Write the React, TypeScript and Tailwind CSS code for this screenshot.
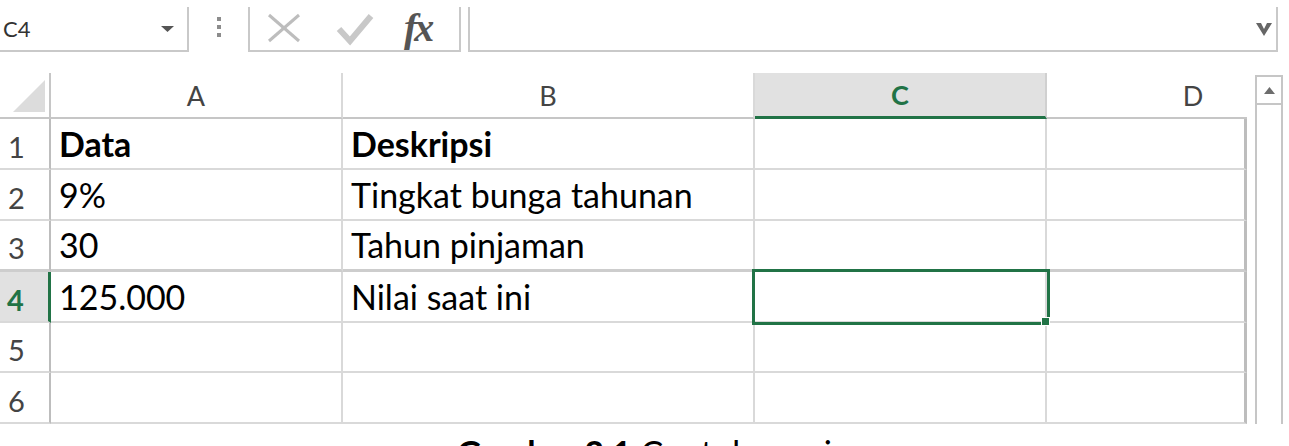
const rows = [
  { n: "1", a: "Data", b: "Deskripsi", bold: true, h: "h-[51px]" },
  { n: "2", a: "9%", b: "Tingkat bunga tahunan", h: "h-[51px]" },
  { n: "3", a: "30", b: "Tahun pinjaman", h: "h-[51px]", dark: true },
  { n: "4", a: "125.000", b: "Nilai saat ini", h: "h-[51px]", selected: true },
  { n: "5", a: "", b: "", h: "h-[50px]" },
  { n: "6", a: "", b: "", h: "h-[51px]" },
];

function FormulaBar() {
  return (
    <div className="flex pt-[7px] h-[52px]">
      <div className="w-[189px] h-[45px] border-r-2 border-b-2 border-[#c9c9c9] flex items-center justify-between pl-[3px] pr-[13px]">
        <span className="text-[22px] leading-none text-[#333]">C4</span>
        <svg width="13" height="6" viewBox="0 0 13 6">
          <polygon points="0,0 13,0 6.5,6" fill="#555" />
        </svg>
      </div>
      <div className="w-[59px] flex flex-col items-center justify-center gap-[4px] pb-[6px]">
        <span className="w-[4px] h-[4px] bg-[#8c8c8c]" />
        <span className="w-[4px] h-[4px] bg-[#8c8c8c]" />
        <span className="w-[4px] h-[4px] bg-[#8c8c8c]" />
      </div>
      <div className="w-[213px] h-[45px] border-x-2 border-b-2 border-[#c9c9c9] flex items-center pl-[17px]">
        <svg width="34" height="30" viewBox="0 0 34 30" className="mt-[-1px]">
          <line x1="2" y1="2" x2="32" y2="28" stroke="#bdbdbd" strokeWidth="3" />
          <line x1="32" y1="2" x2="2" y2="28" stroke="#bdbdbd" strokeWidth="3" />
        </svg>
        <svg width="38" height="34" viewBox="0 0 38 34" className="ml-[35px]">
          <polyline points="3,17 14,29 35,4" fill="none" stroke="#c8c8c8" strokeWidth="6" />
        </svg>
        <span className="ml-[30px] mt-[-2px] font-['Liberation_Serif',serif] italic font-bold text-[40px] leading-none text-[#555] tracking-[-3px]">
          fx
        </span>
      </div>
      <div className="ml-[7px] w-[810px] h-[45px] border-x-2 border-b-2 border-[#c9c9c9] flex items-center justify-end pr-[4px]">
        <svg width="16" height="16" viewBox="0 0 16 16">
          <polygon points="0,2 5,2 8,8 11,2 16,2 8,15" fill="#666" />
        </svg>
      </div>
    </div>
  );
}

function HeaderRow() {
  return (
    <div className="flex h-[46px]">
      <div className="w-[51px] border-r-2 border-r-[#c6c6c6] border-b-2 border-b-[#c6c6c6] relative">
        <svg width="32" height="32" viewBox="0 0 32 32" className="absolute left-[13px] top-[7px]">
          <polygon points="32,0 32,32 0,32" fill="#dcdcdc" />
        </svg>
      </div>
      <div className="w-[292px] border-r-2 border-r-[#d9d9d9] border-b-2 border-b-[#c6c6c6] flex items-center justify-center text-[27px] leading-none text-[#444]">
        A
      </div>
      <div className="w-[412px] border-r-2 border-r-[#d9d9d9] border-b-2 border-b-[#c6c6c6] flex items-center justify-center text-[27px] leading-none text-[#444]">
        B
      </div>
      <div className="w-[292px] bg-[#e1e1e1] border-r-2 border-r-[#d0d0d0] border-b-[3px] border-b-[#217346] flex items-center justify-center text-[27px] leading-none font-bold text-[#217346]">
        C
      </div>
      <div className="w-[200px] border-b-2 border-b-[#c6c6c6] overflow-hidden flex items-center">
        <div className="w-[292px] shrink-0 text-center text-[27px] leading-none text-[#444]">D</div>
      </div>
    </div>
  );
}

function Row({ r }: { r: (typeof rows)[number] }) {
  const bottom = r.dark ? "border-b-[3px] border-b-[#cdcdcd]" : "border-b-2 border-b-[#d9d9d9]";
  const cell = `border-r-2 border-r-[#d9d9d9] ${bottom} flex items-center pl-[8px] text-[34px] leading-none text-black`;
  return (
    <div className={`flex ${r.h}`}>
      {r.selected ? (
        <div className={`w-[51px] bg-[#e1e1e1] border-r-[3px] border-r-[#217346] ${bottom} flex items-center pl-[7px] pt-[5px] text-[29px] leading-none font-bold text-[#217346]`}>
          {r.n}
        </div>
      ) : (
        <div className={`w-[51px] border-r-2 border-r-[#bdbdbd] ${bottom} flex items-center pl-[8px] pt-[5px] text-[29px] leading-none text-[#444]`}>
          {r.n}
        </div>
      )}
      <div className={`w-[292px] ${cell} ${r.bold ? "font-bold" : ""}`}>{r.a}</div>
      <div className={`w-[412px] ${cell} ${r.bold ? "font-bold" : ""}`}>{r.b}</div>
      <div className={`w-[292px] ${cell} relative`}>
        {r.selected && (
          <div className="absolute -left-[3px] -top-[3px] w-[298px] h-[56px] border-[3px] border-[#217346] z-10">
            <span className="absolute left-[286px] top-[45px] w-[9px] h-[9px] bg-[#217346] border border-white" />
          </div>
        )}
      </div>
      <div className={`w-[200px] border-r-[3px] border-r-[#bdbdbd] ${bottom}`} />
    </div>
  );
}

function Scrollbar() {
  return (
    <div className="ml-[8px] w-[28px] mt-[2px] h-[349px] border-x-2 border-t-2 border-[#c6c6c6]">
      <div className="h-[28px] border-b-2 border-[#c6c6c6] flex items-center justify-center">
        <svg width="11" height="7" viewBox="0 0 11 7">
          <polygon points="5.5,0 11,7 0,7" fill="#6d6d6d" />
        </svg>
      </div>
    </div>
  );
}

export default function App() {
  return (
    <div className="w-[1289px] h-[446px] overflow-hidden bg-white font-['Lato',sans-serif] text-black">
      <FormulaBar />
      <div className="flex mt-[21px]">
        <div className="w-[1247px]">
          <HeaderRow />
          {rows.map((r) => (
            <Row key={r.n} r={r} />
          ))}
        </div>
        <Scrollbar />
      </div>
      <div className="pt-[12px] pl-[457px] text-[34px] leading-none whitespace-nowrap">
        <span className="font-bold">Gambar 3.1</span> Contoh persiapan
      </div>
    </div>
  );
}
